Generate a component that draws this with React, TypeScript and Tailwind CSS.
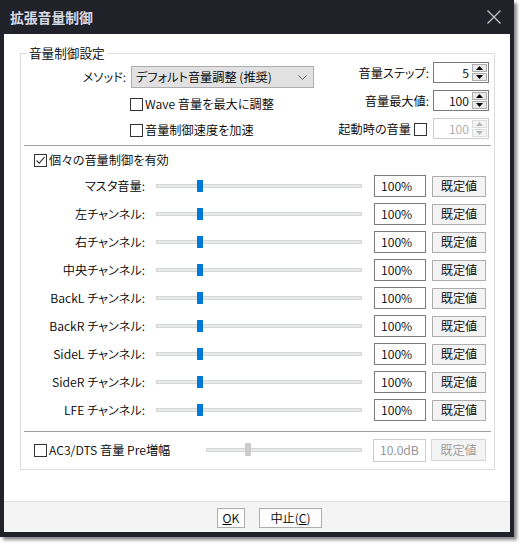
import React from "react";

const T = "text-[12.2px]";

const Check = ({ checked = false, disabled = false }: { checked?: boolean; disabled?: boolean }) => (
  <span
    className={`relative inline-flex w-[13px] h-[13px] shrink-0 border ${disabled ? "border-[#bcbcbc]" : "border-[#333333]"} bg-white items-center justify-center`}
  >
    {checked && (
      <svg width="11" height="11" viewBox="0 0 11 11" className="block">
        <path d="M1.5 5.5 L4.2 8.2 L9.5 2.2" fill="none" stroke="#333" strokeWidth="1.1" />
      </svg>
    )}
  </span>
);

const Tri = ({ up, color }: { up: boolean; color: string }) => (
  <svg width="7" height="4" viewBox="0 0 7 4" className="block">
    {up ? <path d="M0 4 L3.5 0 L7 4 Z" fill={color} /> : <path d="M0 0 L3.5 4 L7 0 Z" fill={color} />}
  </svg>
);

const Spinner = ({ value, disabled = false }: { value: string; disabled?: boolean }) => (
  <div
    className={`w-[56px] h-[21px] border ${disabled ? "border-[#cccccc]" : "border-[#7a7a7a]"} bg-white flex items-stretch`}
  >
    <div
      className={`flex-1 flex items-center justify-end pr-[3px] ${T} leading-[14px] ${disabled ? "text-[#a8a8a8]" : "text-black"}`}
    >
      {value}
    </div>
    <div className="w-[16px] flex flex-col gap-px py-px pr-px">
      <div
        className={`flex-1 border ${disabled ? "border-[#dcdcdc] bg-[#f4f4f4]" : "border-[#adadad] bg-[#e9e9e9]"} flex items-center justify-center`}
      >
        <Tri up color={disabled ? "#b8b8b8" : "#000"} />
      </div>
      <div
        className={`flex-1 border ${disabled ? "border-[#dcdcdc] bg-[#f4f4f4]" : "border-[#adadad] bg-[#e9e9e9]"} flex items-center justify-center`}
      >
        <Tri up={false} color={disabled ? "#b8b8b8" : "#000"} />
      </div>
    </div>
  </div>
);

const SliderRow = ({ label }: { label: string }) => (
  <div className="h-[22px] flex items-center">
    <div className={`w-[124px] text-right ${T} leading-[16px] whitespace-nowrap`}>{label}</div>
    <div className="relative ml-[11px] w-[206px] h-[4px] bg-[#e7eaea] border border-[#d6d6d6]">
      <div className="absolute left-[40px] top-[-5px] w-[6px] h-[12px] bg-[#0078d7]" />
    </div>
    <div className={`ml-[12px] w-[52px] h-[22px] border border-[#7a7a7a] bg-white flex items-center pl-[6px] ${T} leading-[14px]`}>
      100%
    </div>
    <div className={`ml-[6px] w-[54px] h-[21px] border border-[#adadad] bg-[#f3f3f3] flex items-center justify-center ${T} leading-[14px]`}>
      既定値
    </div>
  </div>
);

export default function App() {
  const channels = [
    "マスタ音量:",
    "左チャンネル:",
    "右チャンネル:",
    "中央チャンネル:",
    "BackL チャンネル:",
    "BackR チャンネル:",
    "SideL チャンネル:",
    "SideR チャンネル:",
    "LFE チャンネル:",
  ];
  return (
    <div className="w-[525px] h-[549px] bg-white font-['Noto_Sans_CJK_JP','Noto_Sans',sans-serif] [font-feature-settings:'palt'] font-[350] text-black">
      <div className="w-[514px] h-[537px] bg-[#202129] flex flex-col shadow-[3px_3px_3px_rgba(0,0,0,0.45)]">
        {/* title bar */}
        <div className="h-[34px] flex items-center justify-between pl-[10px] pr-[13px]">
          <span className="text-[13.8px] leading-[16px] font-bold text-[#d6dae4] [font-feature-settings:normal]">拡張音量制御</span>
          <svg width="14" height="14" viewBox="0 0 14 14" className="block">
            <path d="M0.5 0.5 L13.5 13.5 M13.5 0.5 L0.5 13.5" stroke="#c4c4c4" strokeWidth="1.3" />
          </svg>
        </div>
        {/* body */}
        <div className="mx-[4px] mb-[5px] flex-1 bg-white flex flex-col">
          <div className="flex-1 pl-[16px] pr-[15px] pt-[19px]">
            <div className="relative border border-[#dcdcdc] pb-[8px]">
              <span className={`absolute left-[6px] top-[-8px] bg-white px-[2px] text-[12.6px] leading-[14px]`}>
                音量制御設定
              </span>
              {/* top section */}
              <div className="flex justify-between pr-[5px]">
                <div className="flex flex-col">
                  <div className="mt-[12px] h-[22px] flex items-center">
                    <div className={`w-[105px] text-right ${T} leading-[16px]`}>メソッド:</div>
                    <div className="ml-[5px] w-[183px] h-[22px] border border-[#adadad] bg-[#e1e1e1] flex items-center justify-between pl-[4px] pr-[6px]">
                      <span className={`${T} leading-[16px]`}>デフォルト音量調整 (推奨)</span>
                      <svg width="9" height="5" viewBox="0 0 9 5" className="block">
                        <path d="M0.5 0.5 L4.5 4.5 L8.5 0.5" fill="none" stroke="#606060" strokeWidth="1" />
                      </svg>
                    </div>
                  </div>
                  <div className="mt-[8px] h-[16px] flex items-center ml-[109px] gap-[2px]">
                    <Check />
                    <span className={`${T} leading-[16px]`}>Wave 音量を最大に調整</span>
                  </div>
                  <div className="mt-[10px] h-[16px] flex items-center ml-[109px] gap-[2px]">
                    <Check />
                    <span className={`${T} leading-[16px]`}>音量制御速度を加速</span>
                  </div>
                </div>
                <div className="flex flex-col items-end">
                  <div className="mt-[8px] h-[21px] flex items-center gap-[4px]">
                    <span className={`${T} leading-[16px]`}>音量ステップ:</span>
                    <Spinner value="5" />
                  </div>
                  <div className="mt-[7px] h-[21px] flex items-center gap-[4px]">
                    <span className={`${T} leading-[16px]`}>音量最大値:</span>
                    <Spinner value="100" />
                  </div>
                  <div className="mt-[7px] h-[21px] flex items-center">
                    <span className={`${T} leading-[16px]`}>起動時の音量</span>
                    <span className="ml-[3px]">
                      <Check />
                    </span>
                    <span className="ml-[6px]">
                      <Spinner value="100" disabled />
                    </span>
                  </div>
                </div>
              </div>
              <div className="mt-[6px] mx-[3px] h-px bg-[#a0a0a0]" />
              <div className="mt-[6px] h-[16px] flex items-center ml-[13px] gap-[2px]">
                <Check checked />
                <span className={`${T} leading-[16px]`}>個々の音量制御を有効</span>
              </div>
              <div className="mt-[7px] flex flex-col gap-[6px]">
                {channels.map((c) => (
                  <SliderRow key={c} label={c} />
                ))}
              </div>
              <div className="mt-[10px] mx-[3px] h-px bg-[#a0a0a0]" />
              <div className="mt-[7px] h-[22px] flex items-center">
                <div className="ml-[13px] w-[172px] flex items-center gap-[2px]">
                  <Check />
                  <span className={`${T} leading-[16px] whitespace-nowrap`}>AC3/DTS 音量 Pre増幅</span>
                </div>
                <div className="relative w-[156px] h-[4px] bg-[#e7eaea] border border-[#d6d6d6]">
                  <div className="absolute left-[38px] top-[-6px] w-[6px] h-[13px] bg-[#cccccc]" />
                </div>
                <div className={`ml-[11px] w-[53px] h-[23px] border border-[#cccccc] bg-white flex items-center pl-[6px] ${T} leading-[14px] text-[#8a8a8a]`}>
                  10.0dB
                </div>
                <div className={`ml-[5px] w-[55px] h-[22px] border border-[#d5d5d5] bg-[#f4f4f4] flex items-center justify-center ${T} leading-[14px] text-[#9a9a9a]`}>
                  既定値
                </div>
              </div>
            </div>
          </div>
          {/* footer */}
          <div className="h-[31px] border-t border-[#dfdfdf] bg-[#f4f4f4] flex items-start pt-[6px] pl-[213px] gap-[14px]">
            <div className={`w-[28px] h-[20px] border border-[#adadad] bg-[#fdfdfd] flex items-center justify-center ${T} leading-[14px]`}>
              <span>
                <span className="underline">O</span>K
              </span>
            </div>
            <div className={`w-[63px] h-[20px] border border-[#adadad] bg-[#fdfdfd] flex items-center justify-center ${T} leading-[14px]`}>
              <span>
                中止(<span className="underline">C</span>)
              </span>
            </div>
          </div>
        </div>
      </div>
    </div>
  );
}
